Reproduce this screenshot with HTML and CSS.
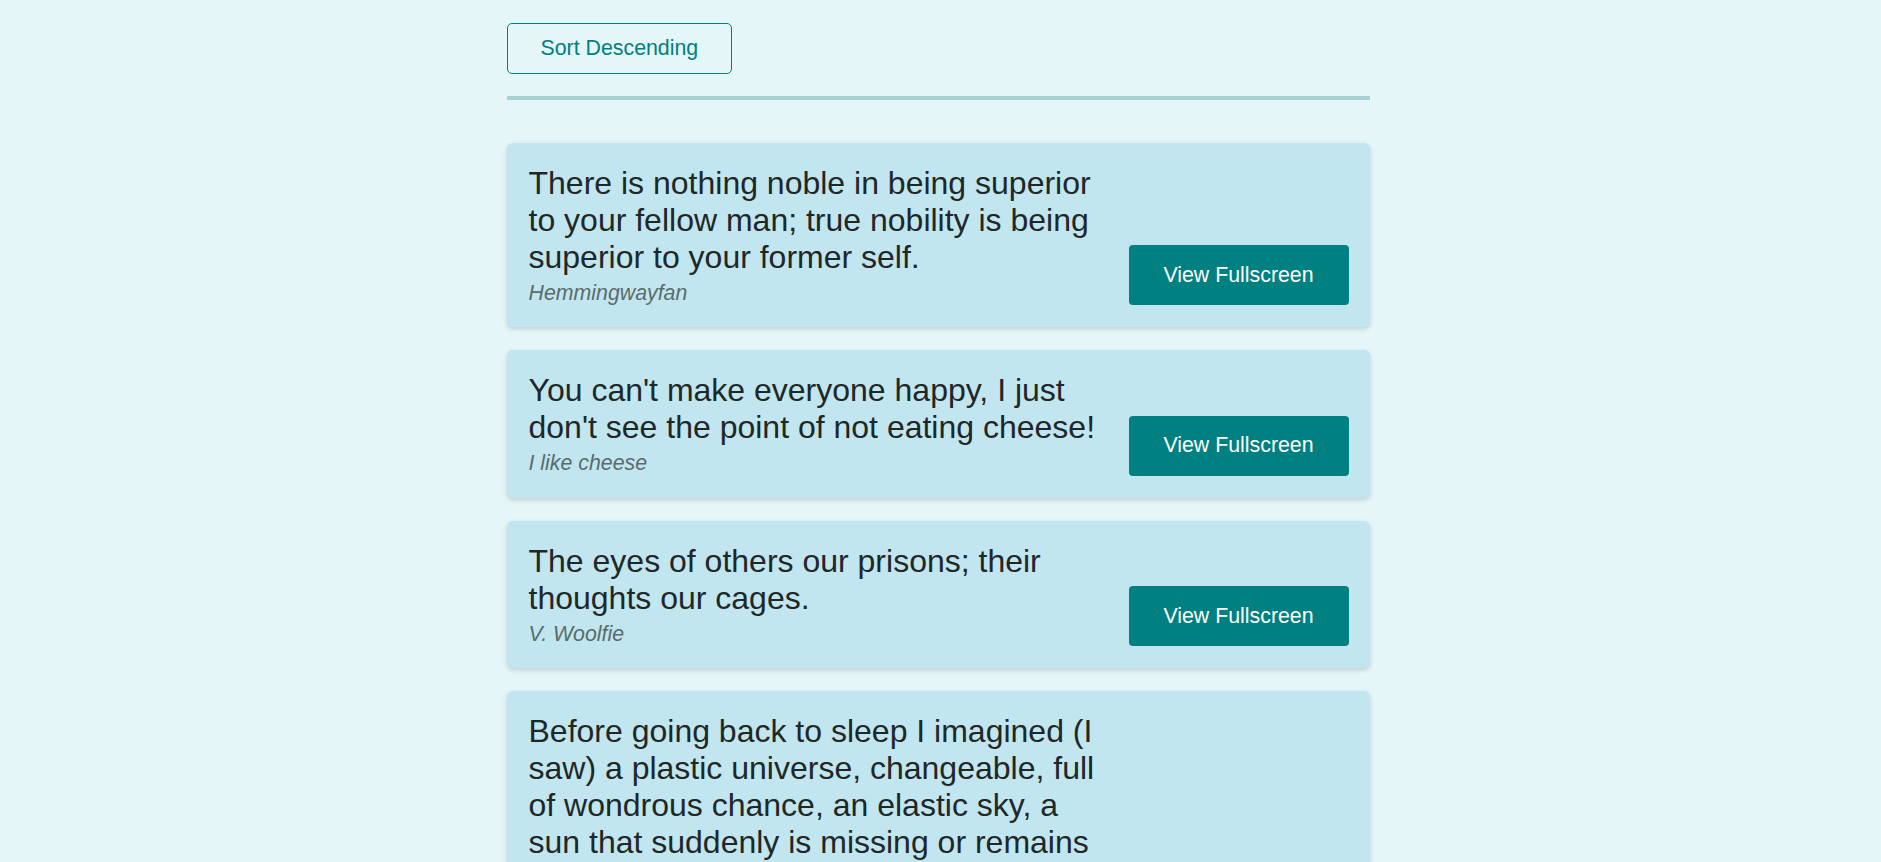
FILE: index.html
```html
<!DOCTYPE html>
<html lang="en">
<head>
<meta charset="utf-8">
<title>Quotes</title>
<link rel="stylesheet" href="styles.css">
</head>
<body>
<main class="page">
  <div class="toolbar">
    <button class="sort-btn" type="button">Sort Descending</button>
  </div>
  <hr class="divider">
  <ul class="quote-list">
    <li class="card">
      <div class="card-text">
        <p class="quote">There is nothing noble in being superior to your fellow man; true nobility is being superior to your former self.</p>
        <p class="author">Hemmingwayfan</p>
      </div>
      <button class="view-btn" type="button">View Fullscreen</button>
    </li>
    <li class="card">
      <div class="card-text">
        <p class="quote">You can't make everyone happy, I just don't see the point of not eating cheese!</p>
        <p class="author">I like cheese</p>
      </div>
      <button class="view-btn" type="button">View Fullscreen</button>
    </li>
    <li class="card">
      <div class="card-text">
        <p class="quote">The eyes of others our prisons; their thoughts our cages.</p>
        <p class="author">V. Woolfie</p>
      </div>
      <button class="view-btn" type="button">View Fullscreen</button>
    </li>
    <li class="card">
      <div class="card-text">
        <p class="quote">Before going back to sleep I imagined (I saw) a plastic universe, changeable, full of wondrous chance, an elastic sky, a sun that suddenly is missing or remains immobile, and the stars that move about the sky.</p>
        <p class="author">Primo</p>
      </div>
      <button class="view-btn" type="button">View Fullscreen</button>
    </li>
  </ul>
</main>
</body>
</html>
```

FILE: styles.css
```css
html, body {
  margin: 0;
  padding: 0;
}

body {
  background: #e4f6f7;
  font-family: "Liberation Sans", Arial, sans-serif;
  color: #222a2a;
}

.page {
  width: 863px;
  margin-left: calc(50% - 434px);
  padding-top: 23px;
}

.toolbar {
  display: flex;
}

.sort-btn {
  font-family: inherit;
  font-size: 21.33px;
  line-height: 24.5px;
  color: #008080;
  background: transparent;
  border: 1px solid #008080;
  border-radius: 5px;
  padding: 12px 33px;
  cursor: pointer;
}

.divider {
  border: 0;
  height: 4px;
  background: #a9d1d4;
  margin: 22px 0 43px 0;
}

.quote-list {
  list-style: none;
  margin: 0;
  padding: 0;
  display: flex;
  flex-direction: column;
  gap: 23px;
}

.card {
  display: flex;
  align-items: flex-end;
  gap: 21px;
  background: #c1e6ef;
  border-radius: 6px;
  padding: 22px 21px 22px 22px;
  box-shadow: 0 2px 5px rgba(0, 0, 0, 0.16);
}

.card-text {
  flex: 1;
  min-width: 0;
}

.quote {
  margin: 0;
  font-size: 32px;
  line-height: normal;
  color: #1f2727;
}

.author {
  margin: 5px 0 0 0;
  font-size: 21.33px;
  line-height: 24.5px;
  font-style: italic;
  color: #5b6b6c;
}

.view-btn {
  flex: none;
  font-family: inherit;
  font-size: 21.33px;
  line-height: 24.5px;
  color: #ffffff;
  background: #008080;
  border: 0;
  border-radius: 4px;
  width: 220px;
  height: 60px;
  padding: 0;
  cursor: pointer;
}
```
